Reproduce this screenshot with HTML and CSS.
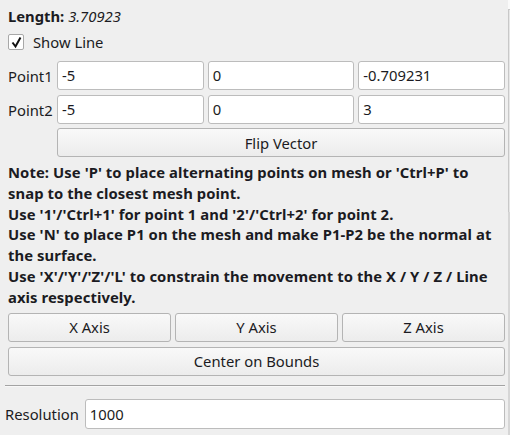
FILE: index.html
```html
<!DOCTYPE html>
<html>
<head>
<meta charset="utf-8">
<link rel="stylesheet" href="styles.css">
</head>
<body>
<div class="panel">
  <div class="content">
    <div class="top">
      <div class="length"><b>Length:</b> <i>3.70923</i></div>
      <div class="check-row">
        <span class="checkbox"><svg width="13" height="13" viewBox="0 0 13 13"><path d="M2.5 6.5 L5.5 10.5 L10.5 1.5" fill="none" stroke="#111" stroke-width="2"/></svg></span>
        <span>Show Line</span>
      </div>
      <div class="point-row">
        <span class="label">Point1</span>
        <div class="field">-5</div>
        <div class="field">0</div>
        <div class="field">-0.709231</div>
      </div>
      <div class="point-row row2">
        <span class="label">Point2</span>
        <div class="field">-5</div>
        <div class="field">0</div>
        <div class="field">3</div>
      </div>
      <div class="flip-row">
        <button class="btn flip">Flip Vector</button>
      </div>
      <div class="note">
        <p>Note: Use 'P' to place alternating points on mesh or 'Ctrl+P' to<br>snap to the closest mesh point.</p>
        <p>Use '1'/'Ctrl+1' for point 1 and '2'/'Ctrl+2' for point 2.</p>
        <p>Use 'N' to place P1 on the mesh and make P1-P2 be the normal at<br>the surface.</p>
        <p>Use 'X'/'Y'/'Z'/'L' to constrain the movement to the X / Y / Z / Line<br>axis respectively.</p>
      </div>
      <div class="axis-row">
        <button class="btn">X Axis</button>
        <button class="btn">Y Axis</button>
        <button class="btn">Z Axis</button>
      </div>
      <button class="btn center">Center on Bounds</button>
    </div>
    <div class="separator"></div>
    <div class="res-row">
      <span class="res-label">Resolution</span>
      <div class="field res">1000</div>
    </div>
  </div>
  <div class="scrollbar">
    <div class="sb-top"></div>
    <div class="sb-thumb"></div>
    <div class="sb-track"></div>
  </div>
</div>
</body>
</html>
```

FILE: styles.css
```css
html, body {
  margin: 0;
  padding: 0;
  background: #efefef;
}
body {
  width: 510px;
  height: 435px;
  overflow: hidden;
  font-family: "Noto Sans", "Open Sans", sans-serif;
  font-size: 14.8px;
  color: #1b1b22;
}
.panel {
  display: flex;
  height: 435px;
}
.content {
  flex: 1;
  padding: 0 3px 0 5px;
  display: flex;
  flex-direction: column;
}
.top {
  padding-left: 3px;
  display: flex;
  flex-direction: column;
}
.length {
  margin-top: 6px;
  line-height: 20px;
}
.length i {
  font-style: italic;
}
.check-row {
  margin-top: 6px;
  display: flex;
  align-items: center;
  gap: 9px;
  line-height: 20px;
}
.checkbox {
  width: 14px;
  height: 14px;
  border: 1px solid #a8a8a8;
  border-radius: 2px;
  background: #fff;
  display: flex;
  align-items: center;
  justify-content: center;
}
.point-row {
  margin-top: 9px;
  display: flex;
  align-items: center;
  gap: 4px;
}
.point-row.row2 {
  margin-top: 5px;
}
.label {
  width: 45px;
}
.field {
  flex: 1;
  height: 27px;
  line-height: 27px;
  background: #fff;
  border: 1px solid #bcbcbc;
  border-radius: 3px;
  padding-left: 4px;
  box-sizing: content-box;
  white-space: nowrap;
}
.flip-row {
  margin-top: 4px;
  padding-left: 49px;
  display: flex;
}
.btn {
  font-family: inherit;
  font-size: 14.8px;
  color: #1b1b22;
  height: 29px;
  border: 1px solid #b4b4b4;
  border-radius: 3px;
  background: linear-gradient(#f9f9f9, #ececec);
  padding: 0;
  margin: 0;
}
.flip {
  flex: 1;
}
.note {
  margin-top: 5px;
  font-weight: bold;
  line-height: 20.8px;
  letter-spacing: 0.08px;
  white-space: nowrap;
}
.note p {
  margin: 0;
}
.axis-row {
  margin-top: 5px;
  display: grid;
  grid-template-columns: 1fr 1fr 1fr;
  gap: 4px;
}
.center {
  margin-top: 5px;
}
.separator {
  margin-top: 9px;
  height: 1px;
  background: #a3a3a3;
  border-bottom: 1px solid #f8f8f8;
}
.res-row {
  margin-top: 12px;
  display: flex;
  align-items: center;
  gap: 6px;
}
.field.res {
  height: 28px;
  line-height: 28px;
}
.scrollbar {
  width: 2px;
  display: flex;
  flex-direction: column;
}
.sb-top {
  height: 9px;
  background: #fafafa;
}
.sb-thumb {
  height: 202px;
  background: #e7e7e7;
  border-top: 1px solid #c8c8c8;
  border-left: 1px solid #c8c8c8;
}
.sb-track {
  flex: 1;
  background: #d6d6d6;
}
```
